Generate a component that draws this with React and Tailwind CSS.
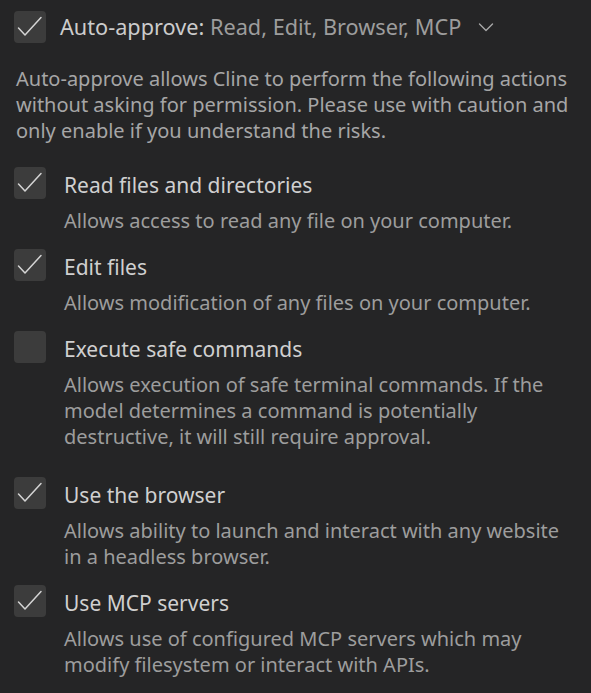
import React, { useState } from "react";

const Check = ({ checked }) => (
  <div className="w-8 h-8 shrink-0 rounded-[4px] bg-[#3c3c3c]">
    {checked && (
      <svg width="32" height="32" viewBox="0 0 32 32" fill="none">
        <path d="M4.5 17 L11 24 L27 6.5" stroke="#d4d4d4" strokeWidth="1.5" strokeLinecap="round" strokeLinejoin="round" />
      </svg>
    )}
  </div>
);

const items = [
  {
    key: "read",
    title: "Read files and directories",
    desc: "Allows access to read any file on your computer.",
    on: true,
  },
  {
    key: "edit",
    title: "Edit files",
    desc: "Allows modification of any files on your computer.",
    on: true,
  },
  {
    key: "exec",
    title: "Execute safe commands",
    desc: "Allows execution of safe terminal commands. If the model determines a command is potentially destructive, it will still require approval.",
    on: false,
  },
  {
    key: "browser",
    title: "Use the browser",
    desc: "Allows ability to launch and interact with any website in a headless browser.",
    on: true,
  },
  {
    key: "mcp",
    title: "Use MCP servers",
    desc: "Allows use of configured MCP servers which may modify filesystem or interact with APIs.",
    on: true,
  },
];

export default function App() {
  const [state, setState] = useState(
    Object.fromEntries(items.map((i) => [i.key, i.on]))
  );

  return (
    <div
      className="w-[591px] h-[693px] bg-[#252526] text-[#cccccc] overflow-hidden"
      style={{ fontFamily: '"Noto Sans", "Open Sans", sans-serif' }}
    >
      {/* Header */}
      <div className="flex items-center pl-[14px] pt-[11px] h-[43px]">
        <Check checked />
        <span className="ml-[14px] text-[21.7px] leading-[26px] whitespace-nowrap">
          Auto-approve:{" "}
          <span className="text-[#9d9d9d]">Read, Edit, Browser, MCP</span>
        </span>
        <svg className="ml-[17px]" width="16" height="16" viewBox="0 0 16 16" fill="none">
          <path d="M1.5 5 L8 11.5 L14.5 5" stroke="#a8a8a8" strokeWidth="1.4" strokeLinecap="round" strokeLinejoin="round" />
        </svg>
      </div>

      {/* Description */}
      <p className="mt-[23px] px-4 text-[20px] leading-[26px] text-[#a6a6a6]">
        Auto-approve allows Cline to perform the following actions without asking for permission. Please use with caution and only enable if you understand the risks.
      </p>

      {/* Options */}
      <div className="mt-[23px] pl-[14px] pr-4 flex flex-col">
        {items.map((item) => (
          <div key={item.key} className={item.key === "exec" ? "mb-[27px]" : "mb-[15px]"}>
            <label
              className="flex items-center cursor-pointer"
              onClick={() => setState((s) => ({ ...s, [item.key]: !s[item.key] }))}
            >
              <Check checked={state[item.key]} />
              <span className="ml-[18px] mt-[3px] text-[21px] leading-[26px] text-[#d0d0d0]">{item.title}</span>
            </label>
            <p className="pl-[50px] mt-[9px] text-[20px] leading-[26px] text-[#9d9d9d]">{item.desc}</p>
          </div>
        ))}
      </div>
    </div>
  );
}
